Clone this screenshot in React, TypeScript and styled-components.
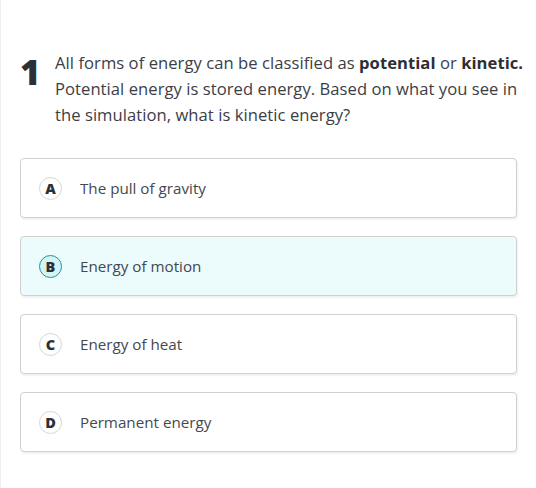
import React, { useState } from 'react';
import styled, { createGlobalStyle } from 'styled-components';

const GlobalStyle = createGlobalStyle`
  html, body {
    margin: 0;
    padding: 0;
    background: #ffffff;
  }
  body {
    font-family: "Open Sans", Lato, Arial, sans-serif;
  }
`;

const Page = styled.div`
  box-sizing: border-box;
  min-height: 488px;
  border-left: 1px solid #eeeeee;
  padding: 50px 19px 0 19px;
`;

const Question = styled.div`
  display: flex;
  align-items: flex-start;
  gap: 19px;
  margin: 0 -14px 30px 0;
`;

const Number = styled.div`
  font-size: 35px;
  font-weight: 800;
  line-height: 34px;
  color: #2c2f36;
  margin-top: 5px;
  width: 16px;
`;

const Prompt = styled.p`
  margin: 0;
  font-size: 16.6px;
  letter-spacing: 0.05px;
  line-height: 26px;
  color: #3b3e45;
  b {
    font-weight: 700;
    color: #2c2f36;
  }
`;

const Choices = styled.div`
  display: flex;
  flex-direction: column;
  gap: 18px;
`;

const Choice = styled.button<{ $selected: boolean }>`
  box-sizing: border-box;
  display: flex;
  align-items: center;
  gap: 18px;
  width: 497px;
  height: 60px;
  padding: 0 0 0 18px;
  border: 1px solid #d0d0d0;
  border-radius: 4px;
  background: ${p => (p.$selected ? '#ecfbfc' : '#ffffff')};
  box-shadow: 1px 2px 2px rgba(0, 0, 0, 0.06);
  font-family: inherit;
  text-align: left;
  cursor: pointer;
`;

const Letter = styled.span<{ $selected: boolean }>`
  box-sizing: border-box;
  display: flex;
  align-items: center;
  justify-content: center;
  width: 23px;
  height: 23px;
  border-radius: 50%;
  border: ${p => (p.$selected ? '1.5px solid #1a9a98' : '1px solid #d6d6d6')};
  background: ${p => (p.$selected ? '#d3f3f4' : '#ffffff')};
  font-size: 14.5px;
  font-weight: 800;
  color: #2c2f36;
`;

const Label = styled.span`
  font-size: 15.2px;
  color: #45484f;
`;

const options = [
  { key: 'A', text: 'The pull of gravity' },
  { key: 'B', text: 'Energy of motion' },
  { key: 'C', text: 'Energy of heat' },
  { key: 'D', text: 'Permanent energy' },
];

export default function App() {
  const [picked, setPicked] = useState('B');

  return (
    <Page>
      <GlobalStyle />
      <Question>
        <Number>1</Number>
        <Prompt>
          All forms of energy can be classified as <b>potential</b> or <b>kinetic.</b> Potential
          energy is stored energy. Based on what you see in the simulation, what is kinetic energy?
        </Prompt>
      </Question>
      <Choices>
        {options.map(o => (
          <Choice key={o.key} $selected={picked === o.key} onClick={() => setPicked(o.key)}>
            <Letter $selected={picked === o.key}>{o.key}</Letter>
            <Label>{o.text}</Label>
          </Choice>
        ))}
      </Choices>
    </Page>
  );
}
